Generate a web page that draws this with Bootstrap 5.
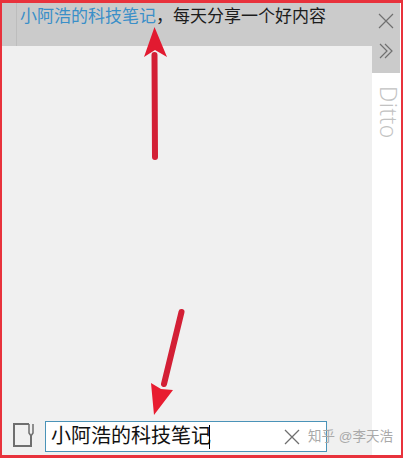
<!DOCTYPE html>
<html lang="zh">
<head>
  <meta charset="UTF-8">
  <title>Ditto</title>
  <link href="https://cdn.jsdelivr.net/npm/bootstrap@5.3.3/dist/css/bootstrap.min.css" rel="stylesheet">
  <style>
    body { margin: 0; width: 403px; height: 458px; overflow: hidden; background: #fff; font-family: "Liberation Sans", "Noto Sans CJK SC", sans-serif; }
    .ditto-frame { width: 403px; height: 458px; border-style: solid; border-color: #e8323c; border-width: 3px 2px 3px 2px; }
    .clip-main { width: 370px; }
    .clip-head { height: 43px; background: #cbcbcb; padding: 2px 0 0 18px; font-size: 17px; line-height: 24px; color: #1c1c1c; }
    .clip-head .hit { color: #3a8fc8; }
    .head-rule { width: 1px; height: 43px; background: #bdbdbd; left: 14px; top: 0; }
    .clip-body { background: #f0f0f0; padding: 0 0 3px 11px; }
    .note-icon { width: 21px; height: 24px; margin-right: 11px; margin-bottom: 5px; }
    .search-box { width: 282px; height: 31px; background: #fff; border: 1px solid #4a93b8; padding-left: 5px; font-size: 20px; line-height: 29px; color: #111; }
    .caret-bar { width: 1px; height: 24px; background: #000; margin-left: -2px; }
    .clear-icon { width: 16px; height: 16px; margin-left: auto; margin-right: 26px; }
    .side-col { width: 28px; background: #fff; }
    .side-top { height: 70px; background: #cbcbcb; padding-top: 10px; gap: 14px; }
    .side-top svg { width: 16px; height: 16px; }
    .ditto-label { writing-mode: vertical-rl; font-family: "Open Sans", "Liberation Sans", sans-serif; font-weight: 300; font-size: 23px; line-height: 28px; letter-spacing: .5px; color: #c2c2c2; margin: 13px 0 0 5px; }
    .arrow-layer { left: -2px; top: -3px; pointer-events: none; }
    .watermark { left: 306px; top: 424px; font-size: 13.5px; line-height: 20px; color: #a9a9a9; white-space: nowrap; }
  </style>
</head>
<body>

  <div class="ditto-frame d-flex position-relative">
    <!-- clip list -->
    <div class="clip-main d-flex flex-column">
      <div class="clip-head position-relative">
        <span class="head-rule position-absolute"></span>
        <span class="hit">小阿浩的科技笔记</span>，每天分享一个好内容
      </div>
      <div class="clip-body flex-grow-1 d-flex align-items-end">
        <svg class="note-icon flex-shrink-0" viewBox="0 0 21 24" fill="none" stroke="#6e6e6e" stroke-width="2">
          <path d="M16 1H1V23H18V13"/>
          <path d="M16 1V10L18 13L20 10V1" stroke-width="1.500"/>
        </svg>
        <div class="search-box d-flex align-items-center">
          <span>小阿浩的科技笔记</span><span class="caret-bar"></span>
          <svg class="clear-icon" viewBox="0 0 16 16" fill="none" stroke="#6f6f6f" stroke-width="1.3">
            <path d="M1 1L15 15M15 1L1 15"/>
          </svg>
        </div>
      </div>
    </div>

    <!-- side strip -->
    <div class="side-col d-flex flex-column align-items-center">
      <div class="side-top w-100 d-flex flex-column align-items-center">
        <svg viewBox="0 0 16 16" fill="none" stroke="#707070" stroke-width="1.2"><path d="M1 1L15 15M15 1L1 15"/></svg>
        <svg viewBox="0 0 16 16" fill="none" stroke="#707070" stroke-width="1.2"><path d="M2 1L9 8L2 15M7 1L14 8L7 15"/></svg>
      </div>
      <div class="ditto-label">Ditto</div>
    </div>

    <div class="watermark position-absolute">知乎 @李天浩</div>

    <!-- red arrows drawn over the window -->
    <svg class="arrow-layer position-absolute" width="403" height="458" viewBox="0 0 403 458">
      <path d="M155 157L154.500 55" stroke="#d31f35" stroke-width="6" stroke-linecap="round" fill="none"/>
      <path d="M154.500 27L167 57L155 50L144 57Z" fill="#e21a30"/>
      <path d="M181.500 312L164 384" stroke="#d31f35" stroke-width="6" stroke-linecap="round" fill="none"/>
      <path d="M154 415L151 383L161 389L173 390Z" fill="#e81c30"/>
    </svg>
  </div>

</body>
</html>
